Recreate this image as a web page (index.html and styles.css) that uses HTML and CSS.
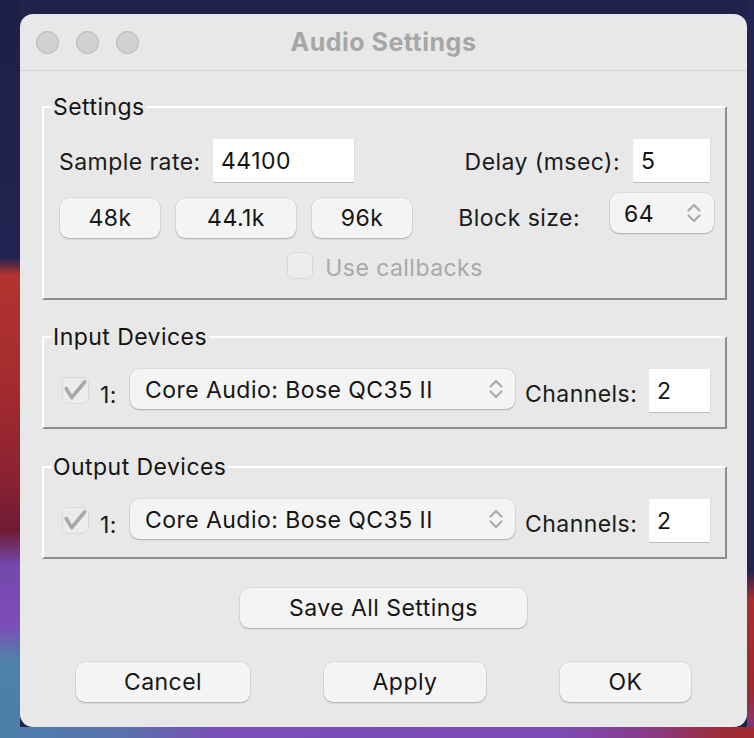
FILE: index.html
```html
<!DOCTYPE html>
<html>
<head>
<meta charset="utf-8">
<link rel="stylesheet" href="styles.css">
</head>
<body>
<div class="desktop">
  <div class="window">
    <div class="titlebar">
      <div class="lights"><span class="light"></span><span class="light"></span><span class="light"></span></div>
      <div class="title">Audio Settings</div>
      <div></div>
    </div>
    <div class="content">
      <fieldset class="group">
        <legend>Settings</legend>
        <div class="srow srow1">
          <div class="pair">
            <span class="lbl lbl-rate">Sample rate:</span>
            <div class="field w-rate">44100</div>
          </div>
          <div class="pair">
            <span class="lbl lbl-right lbl-delay">Delay (msec):</span>
            <div class="field w-delay">5</div>
          </div>
        </div>
        <div class="srow srow2">
          <div class="btns">
            <button class="btn b-48">48k</button>
            <button class="btn b-44">44.1k</button>
            <button class="btn b-96">96k</button>
          </div>
          <div class="pair pair-block">
            <span class="lbl lbl-right lbl-block">Block size:</span>
            <div class="combo w-block"><span class="ctext">64</span>
              <svg class="chev" width="14" height="22" viewBox="0 0 14 22"><path d="M1.5 8.5 L7 3 L12.5 8.5 M1.5 13.5 L7 19 L12.5 13.5" fill="none" stroke="#ababab" stroke-width="2.2" stroke-linecap="round" stroke-linejoin="round"/></svg>
            </div>
          </div>
        </div>
        <div class="srow srow3">
          <span class="cbox"></span>
          <span class="dim">Use callbacks</span>
        </div>
      </fieldset>

      <fieldset class="group group-dev">
        <legend>Input Devices</legend>
        <div class="devrow">
          <span class="cbox checked">
            <svg width="27" height="27" viewBox="0 0 27 27"><path d="M4.2 11.5 L9.7 20.6 L22.6 5" fill="none" stroke="#a8a8a8" stroke-width="3.6" stroke-linecap="round" stroke-linejoin="round"/></svg>
          </span>
          <span class="num">1:</span>
          <div class="combo w-dev"><span class="ctext">Core Audio: Bose QC35 II</span>
            <svg class="chev" width="14" height="22" viewBox="0 0 14 22"><path d="M1.5 8.5 L7 3 L12.5 8.5 M1.5 13.5 L7 19 L12.5 13.5" fill="none" stroke="#ababab" stroke-width="2.2" stroke-linecap="round" stroke-linejoin="round"/></svg>
          </div>
          <span class="lbl lbl-ch">Channels:</span>
          <div class="field w-ch">2</div>
        </div>
      </fieldset>

      <fieldset class="group group-dev group-out">
        <legend>Output Devices</legend>
        <div class="devrow">
          <span class="cbox checked">
            <svg width="27" height="27" viewBox="0 0 27 27"><path d="M4.2 11.5 L9.7 20.6 L22.6 5" fill="none" stroke="#a8a8a8" stroke-width="3.6" stroke-linecap="round" stroke-linejoin="round"/></svg>
          </span>
          <span class="num">1:</span>
          <div class="combo w-dev"><span class="ctext">Core Audio: Bose QC35 II</span>
            <svg class="chev" width="14" height="22" viewBox="0 0 14 22"><path d="M1.5 8.5 L7 3 L12.5 8.5 M1.5 13.5 L7 19 L12.5 13.5" fill="none" stroke="#ababab" stroke-width="2.2" stroke-linecap="round" stroke-linejoin="round"/></svg>
          </div>
          <span class="lbl lbl-ch">Channels:</span>
          <div class="field w-ch">2</div>
        </div>
      </fieldset>

      <div class="saverow">
        <button class="btn b-save">Save All Settings</button>
      </div>
      <div class="actions">
        <button class="btn b-cancel">Cancel</button>
        <button class="btn b-apply">Apply</button>
        <button class="btn b-ok">OK</button>
      </div>
    </div>
  </div>
</div>
</body>
</html>
```

FILE: styles.css
```css
* { box-sizing: border-box; }

html, body {
  margin: 0;
  padding: 0;
}

body {
  width: 754px;
  height: 738px;
  overflow: hidden;
  font-family: "Inter", "Liberation Sans", sans-serif;
  background-color: #21224a;
  background-image:
    linear-gradient(to right, #4b7fa9 0px, #5a72ad 120px, #7a4fb6 220px, #7b4cb4 560px, #8a3a86 650px, #9b2c3a 720px, #a02a30 754px),
    linear-gradient(to bottom, #1f2048 0px, #222350 258px, #b3332f 275px, #a52c2f 380px, #8a2232 480px, #6f1b34 530px, #7448ac 565px, #7d4db8 625px, #4f80a9 660px, #4a7fa8 738px),
    linear-gradient(to bottom, #222350 0px, #23244e 570px, #a62e2f 600px, #9a2a30 690px, #7b3a8c 738px);
  background-repeat: no-repeat;
  background-size: 754px 11px, 20px 738px, 7px 738px;
  background-position: 0 727px, 0 0, 747px 0;
}

.desktop {
  padding: 14px 7px 11px 20px;
}

.window {
  width: 727px;
  height: 713px;
  background: #e8e8e8;
  border-radius: 13px;
  overflow: hidden;
  display: flex;
  flex-direction: column;
}

.titlebar {
  height: 57px;
  flex: none;
  border-bottom: 1px solid #d3d3d3;
  display: grid;
  grid-template-columns: 1fr auto 1fr;
  align-items: center;
}

.lights {
  display: flex;
  gap: 17px;
  padding-left: 16px;
}

.light {
  width: 23px;
  height: 23px;
  border-radius: 50%;
  background: #d1d1d1;
  border: 1px solid #b5b5b5;
}

.title {
  font-weight: 700;
  font-size: 25px;
  color: #a7a7a7;
  letter-spacing: 0.5px;
}

.content {
  padding: 23px 20px 0 22px;
  display: flex;
  flex-direction: column;
  color: #1b1b1b;
  font-size: 23px;
  letter-spacing: 0.45px;
}

.group {
  margin: 0;
  padding: 19px 0 19px 0;
  border: 2px solid;
  border-color: #ffffff #8d8d8d #8d8d8d #ffffff;
  min-width: 0;
}

.group legend {
  margin-left: 8px;
  padding: 1px 2px 0 1px;
  font-size: 23px;
  line-height: 25px;
  color: #141414;
}

.group-dev {
  margin-top: 24px;
  padding-bottom: 14px;
}

.group-out {
  margin-top: 25px;
}

.srow {
  display: flex;
  align-items: center;
}

.srow1 {
  height: 43px;
  justify-content: space-between;
  padding: 0 15px 0 15px;
}

.srow2 {
  margin-top: 11px;
  height: 45px;
  justify-content: space-between;
  padding: 0 11px 0 16px;
  align-items: stretch;
}

.srow3 {
  margin-top: 13px;
  height: 28px;
  justify-content: center;
  gap: 12px;
  padding-left: 1px;
}

.pair {
  display: flex;
  align-items: center;
}

.lbl {
  white-space: nowrap;
}

.lbl-rate {
  width: 154px;
  padding-top: 3px;
}

.lbl-right {
  text-align: right;
}

.lbl-delay {
  margin-right: 13px;
  padding-top: 3px;
}

.lbl-block {
  margin-right: 30px;
  padding-top: 5px;
}

.pair-block {
  align-items: flex-start;
}

.pair-block .lbl {
  align-self: center;
}

.field {
  background: #ffffff;
  height: 43px;
  box-shadow: 0 1px 0 #bdbdbd, 1px 0 0 #dcdcdc;
  padding-left: 8px;
  display: flex;
  align-items: center;
  color: #141414;
}

.w-rate { width: 141px; }
.w-delay { width: 77px; }
.w-ch { width: 61px; height: 43px; }

.btns {
  display: flex;
  gap: 16px;
  align-items: flex-end;
}

.btn {
  font-family: inherit;
  font-size: 23px;
  letter-spacing: 0.45px;
  color: #161616;
  background: #f4f4f4;
  border: none;
  border-radius: 9px;
  height: 40px;
  padding: 0;
  box-shadow: 0 0 0 0.5px rgba(0, 0, 0, 0.10), 0 1px 1.5px rgba(0, 0, 0, 0.22);
}

.b-48 { width: 100px; }
.b-44 { width: 120px; }
.b-96 { width: 100px; }

.combo {
  background: #f4f4f4;
  border-radius: 9px;
  height: 40px;
  box-shadow: 0 0 0 0.5px rgba(0, 0, 0, 0.10), 0 1px 1.5px rgba(0, 0, 0, 0.22);
  display: flex;
  align-items: center;
  justify-content: space-between;
  color: #141414;
}

.ctext {
  padding-top: 2px;
}

.w-block {
  width: 104px;
  padding: 0 13px 0 14px;
}

.w-dev {
  width: 385px;
  padding: 0 12px 0 15px;
  flex: none;
}

.chev {
  flex: none;
}

.cbox {
  width: 26px;
  height: 27px;
  border-radius: 6px;
  background: #ececec;
  border: 1px solid #d9d9d9;
  flex: none;
  display: block;
  position: relative;
}

.cbox svg {
  display: block;
  margin: -1px;
}

.dim {
  color: #a9a9a9;
  padding-top: 5px;
}

.devrow {
  display: flex;
  align-items: flex-start;
  height: 44px;
  padding-left: 18px;
}

.devrow .cbox {
  width: 27px;
  margin-top: 8px;
  margin-right: 11px;
}

.num {
  width: 30px;
  margin-top: 12px;
}

.lbl-ch {
  width: 134px;
  padding-left: 10px;
  margin-top: 11px;
}

.saverow {
  margin-top: 29px;
  display: flex;
  justify-content: center;
  padding-right: 2px;
}

.b-save { width: 287px; }

.actions {
  margin-top: 34px;
  display: flex;
  justify-content: space-between;
  padding: 0 36px 0 34px;
}

.b-cancel { width: 174px; }
.b-apply { width: 162px; }
.b-ok { width: 131px; }
```
